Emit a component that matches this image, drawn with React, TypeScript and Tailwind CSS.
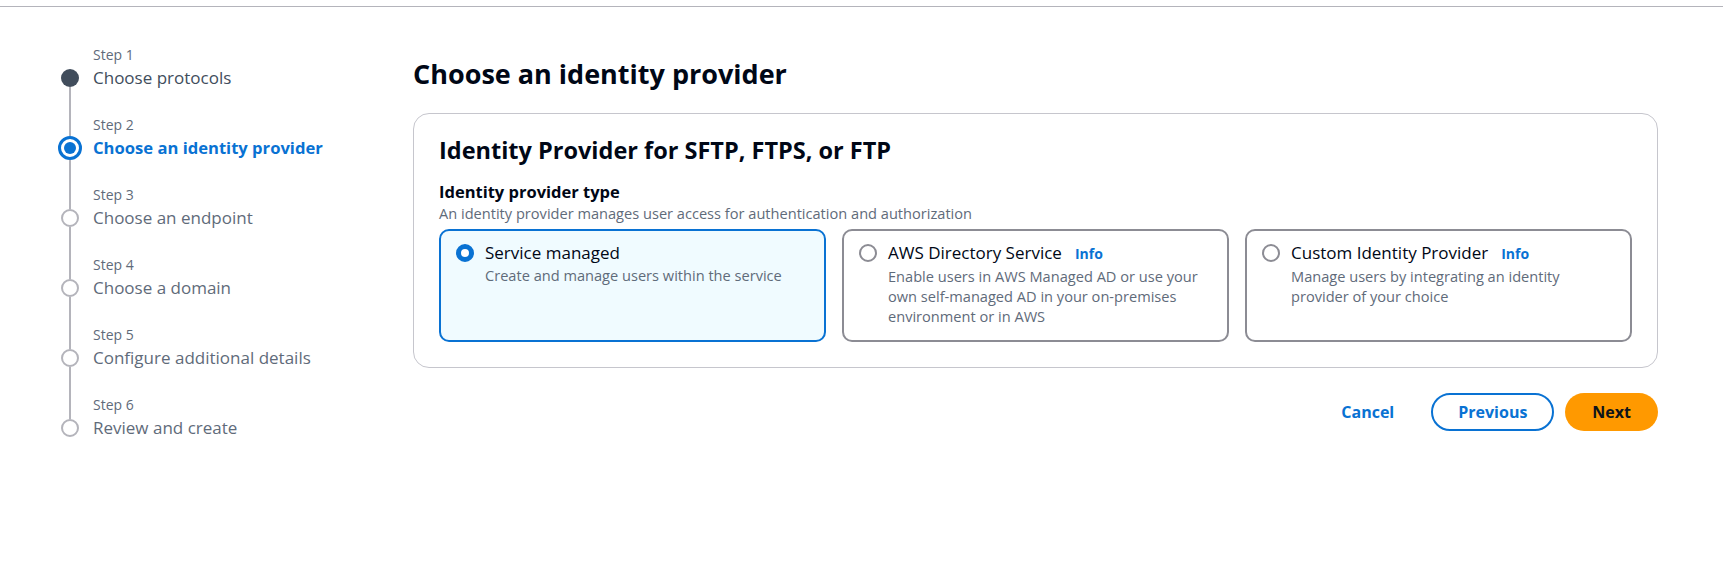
const steps = [
  { n: 1, title: "Choose protocols", state: "done" },
  { n: 2, title: "Choose an identity provider", state: "current" },
  { n: 3, title: "Choose an endpoint", state: "todo" },
  { n: 4, title: "Choose a domain", state: "todo" },
  { n: 5, title: "Configure additional details", state: "todo" },
  { n: 6, title: "Review and create", state: "todo" },
]

const tiles = [
  {
    title: "Service managed",
    desc: "Create and manage users within the service",
    info: false,
    selected: true,
  },
  {
    title: "AWS Directory Service",
    desc: "Enable users in AWS Managed AD or use your own self-managed AD in your on-premises environment or in AWS",
    info: true,
    selected: false,
  },
  {
    title: "Custom Identity Provider",
    desc: "Manage users by integrating an identity provider of your choice",
    info: true,
    selected: false,
  },
]

const StepDot = ({ state }: { state: string }) => {
  if (state === "done") return <div className="w-[18px] h-[18px] rounded-full bg-[#414d5c]" />
  if (state === "current")
    return (
      <div className="w-[24px] h-[24px] rounded-full border-[3px] border-[#0972d3] flex items-center justify-center">
        <div className="w-[12px] h-[12px] rounded-full bg-[#0972d3]" />
      </div>
    )
  return <div className="w-[18px] h-[18px] rounded-full border-2 border-[#b4b4bb]" />
}

const Nav = () => (
  <nav className="w-[355px] shrink-0">
    {steps.map((s, i) => (
      <div key={s.n} className="flex gap-[11px]">
        <div className="w-[24px] flex flex-col items-center">
          <div
            className={`w-[2px] ${s.state === "current" ? "h-[22px]" : "h-[25px]"} ${i === 0 ? "" : "bg-[#b4b4bb]"}`}
          />
          <StepDot state={s.state} />
          <div className={`w-[2px] flex-1 ${i === steps.length - 1 ? "" : "bg-[#b4b4bb]"}`} />
        </div>
        <div className="pb-[24px]">
          <div className="text-[14px] leading-[22px] text-[#5f6b7a]">Step {s.n}</div>
          <div
            className={`leading-[24px] ${
              s.state === "current"
                ? "text-[16.6px] font-bold text-[#0972d3]"
                : s.state === "done"
                ? "text-[17px] text-[#414d5c]"
                : "text-[17px] text-[#5f6b7a]"
            }`}
          >
            {s.title}
          </div>
        </div>
      </div>
    ))}
  </nav>
)

const Tile = ({ t }: { t: (typeof tiles)[number] }) => (
  <div
    className={`flex gap-[11px] rounded-[10px] border-2 pl-[15px] pr-[16px] pt-[10px] pb-[14px] ${
      t.selected ? "border-[#0972d3] bg-[#f0fbff]" : "border-[#8c8c94] bg-white"
    }`}
  >
    <div
      className={`mt-[3px] w-[18px] h-[18px] shrink-0 rounded-full ${
        t.selected ? "border-[5px] border-[#0972d3] bg-white" : "border-2 border-[#8c8c94]"
      }`}
    />
    <div>
      <div className="text-[17px] leading-[24px] text-[#000716]">
        {t.title}
        {t.info && <span className="ml-[13px] text-[14px] font-bold text-[#0972d3]">Info</span>}
      </div>
      <div className="text-[14.6px] leading-[20px] text-[#5f6b7a]">{t.desc}</div>
    </div>
  </div>
)

export default function App() {
  return (
    <div className="min-h-screen bg-white font-['Open_Sans',sans-serif]">
      <div className="h-[7px] border-b border-[#b4b4bb]" />
      <div className="flex pl-[58px] pr-[65px] pt-[37px]">
        <Nav />
        <main className="flex-1 pt-[12px]">
          <h1 className="text-[27px] leading-[36px] font-bold text-[#000716]">Choose an identity provider</h1>
          <div className="mt-[21px] rounded-[16px] border border-[#c6c6cd] px-[25px] pt-[21px] pb-[25px]">
            <h2 className="text-[23.5px] leading-[30px] font-bold text-[#000716]">
              Identity Provider for SFTP, FTPS, or FTP
            </h2>
            <div className="mt-[16px] text-[16.5px] leading-[22px] font-bold text-[#000716]">Identity provider type</div>
            <div className="text-[14.6px] leading-[20px] text-[#5f6b7a]">
              An identity provider manages user access for authentication and authorization
            </div>
            <div className="mt-[6px] grid grid-cols-3 gap-[16px]">
              {tiles.map((t) => (
                <Tile key={t.title} t={t} />
              ))}
            </div>
          </div>
          <div className="mt-[25px] flex items-center justify-end">
            <button className="h-[38px] px-[20px] mr-[17px] text-[16px] font-bold text-[#0972d3]">Cancel</button>
            <button className="h-[38px] px-[25px] mr-[11px] rounded-full border-2 border-[#0972d3] text-[16px] font-bold text-[#0972d3]">
              Previous
            </button>
            <button className="h-[38px] px-[27px] rounded-full bg-[#ff9900] text-[16px] font-bold text-[#0f141a]">
              Next
            </button>
          </div>
        </main>
      </div>
    </div>
  )
}
